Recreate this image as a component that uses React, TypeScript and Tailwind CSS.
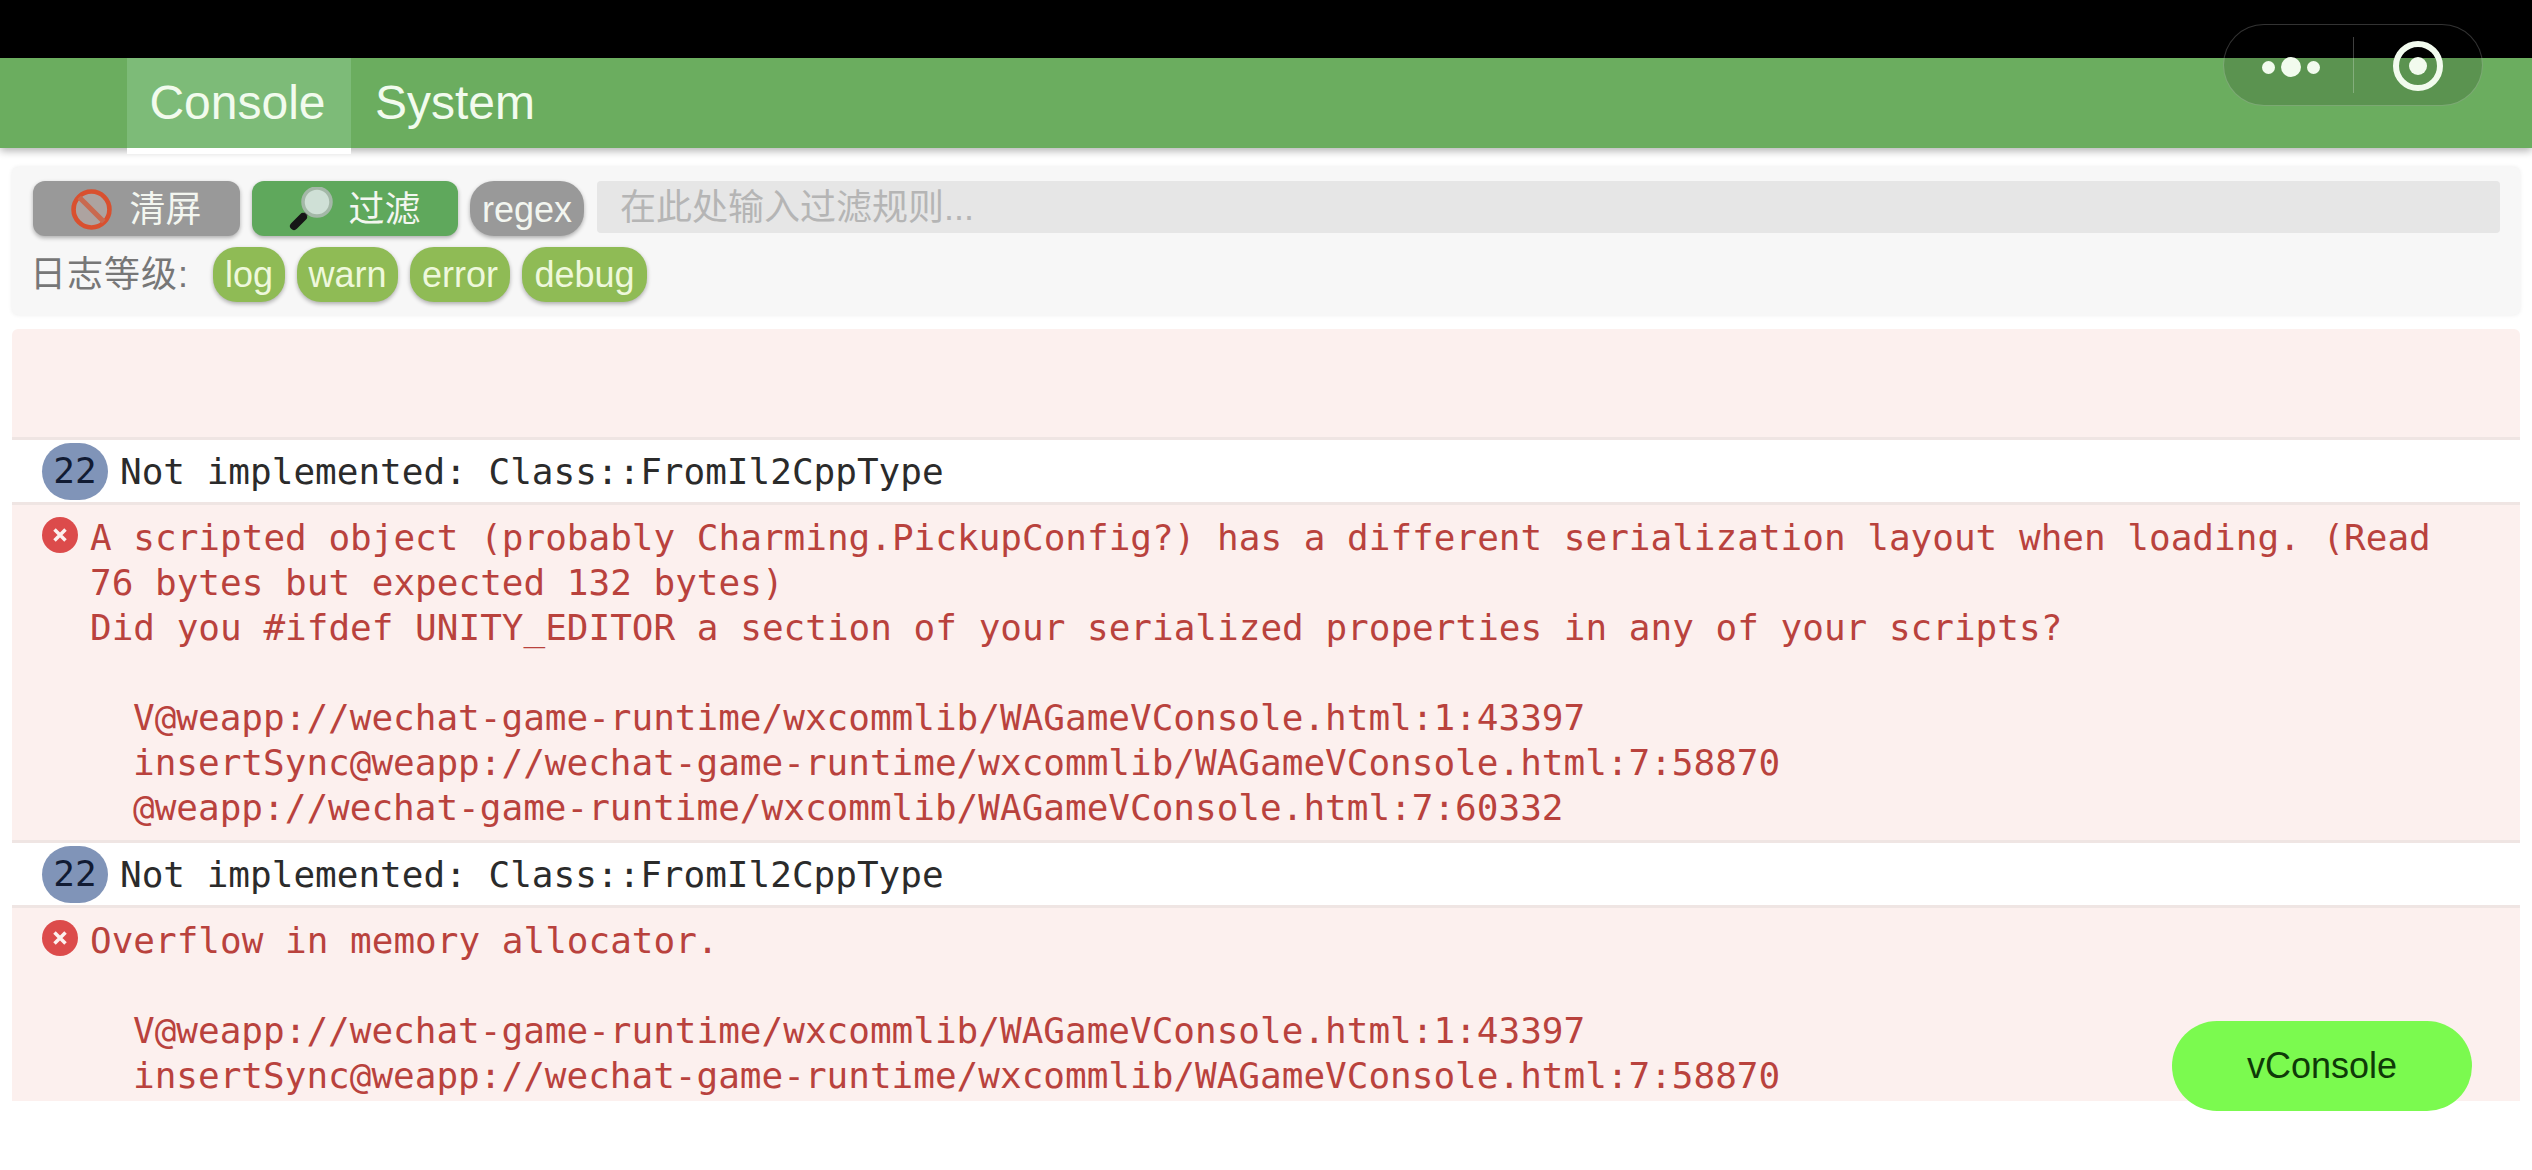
import React from "react";

const sans = "font-['Liberation_Sans','Noto_Sans_CJK_SC',sans-serif]";
const mono = "font-['DejaVu_Sans_Mono','Noto_Sans_CJK_SC',monospace]";

function NoEntryIcon() {
  return (
    <svg viewBox="0 0 40 40" className="w-[41px] h-[41px] shrink-0">
      <circle cx="20" cy="20" r="17.5" fill="#ada3a0" stroke="#d9502f" strokeWidth="4.5" />
      <path d="M8 8 L32 32" stroke="#c9694f" strokeWidth="5" />
    </svg>
  );
}

function MagnifierIcon() {
  return (
    <svg viewBox="0 0 45 45" className="w-[45px] h-[45px] shrink-0">
      <path d="M21 23 L14 30" stroke="#4a4f49" strokeWidth="4" />
      <path d="M14 30 L5 39" stroke="#161616" strokeWidth="8" strokeLinecap="round" />
      <circle cx="28" cy="15" r="14" fill="#cfe0d6" stroke="#a4b8a8" strokeWidth="3.5" />
    </svg>
  );
}

function ToolButton({ className, children }: { className: string; children: React.ReactNode }) {
  return (
    <div className={`h-[55px] pt-[2px] flex items-center justify-center text-[36px] text-[#f3f6f0] shadow-[0_2px_4px_rgba(0,0,0,0.3)] ${className}`}>
      {children}
    </div>
  );
}

function LevelButton({ className, children }: { className: string; children: React.ReactNode }) {
  return (
    <div className={`h-[55px] flex items-center justify-center rounded-[24px] bg-[#8fbb55] text-[36px] text-[#eef8dc] shadow-[0_2px_4px_rgba(0,0,0,0.3)] ${className}`}>
      {children}
    </div>
  );
}

function CountRow() {
  return (
    <div className="h-[68px] pl-[30px] flex items-center gap-[12px] bg-white border-y-[3px] border-[#efe5e3]">
      <div className="w-[66px] h-[57px] rounded-full bg-[#8094b8] flex items-center justify-center text-[36px] text-[#111b33]">22</div>
      <div className="pt-[2px] text-[36px] text-[#2b2b2b]">Not implemented: Class::FromIl2CppType</div>
    </div>
  );
}

function ErrorRow({ lines, stack }: { lines: string[]; stack: string[] }) {
  return (
    <div className="pl-[30px] pt-[10px] pb-[10px] flex gap-[12px] bg-[#fcf0ee] text-[#b9423d] text-[36px] leading-[45px]">
      <svg viewBox="0 0 36 36" className="w-[36px] h-[36px] mt-[2px] shrink-0">
        <circle cx="18" cy="18" r="18" fill="#dc4b4b" />
        <path d="M12.5 12.5 L23.5 23.5 M23.5 12.5 L12.5 23.5" stroke="#fcf0ee" strokeWidth="3.5" />
      </svg>
      <div>
        {lines.map((line, i) => (
          <div key={i} className="h-[45px] whitespace-pre">{line}</div>
        ))}
        <div className="h-[45px]" />
        {stack.map((line, i) => (
          <div key={i} className="h-[45px] pl-[43px] whitespace-pre">{line}</div>
        ))}
      </div>
    </div>
  );
}

export default function App() {
  return (
    <div className={`relative w-[2532px] h-[1170px] overflow-hidden bg-white ${sans}`}>
      <div className="h-[58px] bg-black" />

      {/* tab bar */}
      <div className="h-[90px] pl-[127px] flex bg-[#6bad5f] shadow-[0_3px_8px_rgba(0,0,0,0.3)] text-[48px] text-[#f2fbee]">
        <div className="w-[224px] h-[96px] flex items-center justify-center pb-[1px] pr-[3px] bg-[#7dbb78] border-b-[6px] border-white">Console</div>
        <div className="pl-[24px] h-[90px] flex items-center">System</div>
      </div>

      {/* toolbar */}
      <div className="mt-[19px] mx-[12px] h-[148px] pl-[21px] pr-[20px] pt-[14px] bg-[#f7f7f7] rounded-[6px] shadow-[0_0_4px_rgba(0,0,0,0.08)]">
        <div className="flex gap-[12px]">
          <ToolButton className="w-[207px] gap-[17px] rounded-[12px] bg-[#999999]">
            <NoEntryIcon />
            <span>清屏</span>
          </ToolButton>
          <ToolButton className="w-[206px] gap-[14px] rounded-[12px] bg-[#5fa85c]">
            <MagnifierIcon />
            <span>过滤</span>
          </ToolButton>
          <ToolButton className="w-[114px] rounded-[24px] bg-[#999999]">regex</ToolButton>
          <div className="ml-[1px] flex-1 h-[52px] pl-[23px] pt-[2px] flex items-center rounded-[4px] bg-[#e6e6e6] text-[36px] text-[#b5b5b5]">在此处输入过滤规则...</div>
        </div>
        <div className="mt-[11px] flex items-center">
          <div className="w-[180px] -ml-[3px] mr-[3px] tracking-[1px] text-[36px] text-[#777777]">日志等级:</div>
          <div className="flex gap-[12px]">
            <LevelButton className="w-[72px]">log</LevelButton>
            <LevelButton className="w-[101px]">warn</LevelButton>
            <LevelButton className="w-[100px]">error</LevelButton>
            <LevelButton className="w-[125px]">debug</LevelButton>
          </div>
        </div>
      </div>

      {/* log list */}
      <div className={`mt-[14px] mx-[12px] h-[772px] overflow-hidden ${mono}`}>
        <div className="h-[108px] bg-[#fcf0ee] rounded-t-[6px]" />
        <CountRow />
        <ErrorRow
          lines={[
            "A scripted object (probably Charming.PickupConfig?) has a different serialization layout when loading. (Read",
            "76 bytes but expected 132 bytes)",
            "Did you #ifdef UNITY_EDITOR a section of your serialized properties in any of your scripts?",
          ]}
          stack={[
            "V@weapp://wechat-game-runtime/wxcommlib/WAGameVConsole.html:1:43397",
            "insertSync@weapp://wechat-game-runtime/wxcommlib/WAGameVConsole.html:7:58870",
            "@weapp://wechat-game-runtime/wxcommlib/WAGameVConsole.html:7:60332",
          ]}
        />
        <CountRow />
        <ErrorRow
          lines={["Overflow in memory allocator."]}
          stack={[
            "V@weapp://wechat-game-runtime/wxcommlib/WAGameVConsole.html:1:43397",
            "insertSync@weapp://wechat-game-runtime/wxcommlib/WAGameVConsole.html:7:58870",
          ]}
        />
      </div>

      {/* capsule over the top bar */}
      <div className="absolute left-[2223px] top-[24px] w-[260px] h-[82px] flex items-center rounded-full bg-black/15 border border-white/20">
        <div className="w-[129px] pl-[4px] pt-[4px] flex items-center justify-center gap-[6px]">
          <span className="w-[13px] h-[13px] rounded-full bg-[#f2fbee]" />
          <span className="w-[20px] h-[20px] rounded-full bg-[#f2fbee]" />
          <span className="w-[13px] h-[13px] rounded-full bg-[#f2fbee]" />
        </div>
        <div className="w-px h-[56px] bg-white/25" />
        <div className="flex-1 pt-[2px] flex items-center justify-center">
          <div className="w-[50px] h-[50px] rounded-full border-[6px] border-[#f2fbee] flex items-center justify-center">
            <span className="w-[18px] h-[18px] rounded-full bg-[#f2fbee]" />
          </div>
        </div>
      </div>

      <div className="absolute left-[2172px] top-[1021px] w-[300px] h-[90px] flex items-center justify-center rounded-full bg-[#7bfa4f] text-[36px] text-[#0f3a08]">vConsole</div>
    </div>
  );
}
